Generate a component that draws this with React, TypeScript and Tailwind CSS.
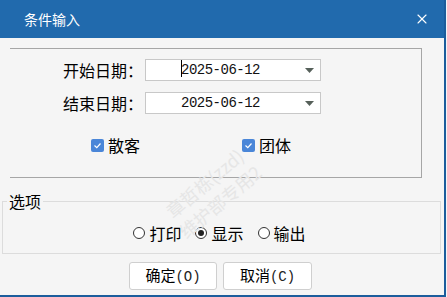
import { X } from 'lucide-react';

const cjk = { fontFamily: '"Noto Sans CJK SC", "Microsoft YaHei", sans-serif' };
const mono = { fontFamily: '"Liberation Mono", "DejaVu Sans Mono", monospace' };

const DateBox = ({ value, caret }: { value: string; caret?: boolean }) => (
  <div className="flex h-[22px] w-[176px] items-center border border-[#c8c8c8] bg-white">
    <div className="flex flex-1 justify-center pr-[10px]">
      <span className="relative text-[14px] leading-none tracking-[-0.5px] text-[#111]" style={mono}>
        {caret && <span className="absolute left-0 top-[-3px] h-[17px] w-px bg-black" />}
        {value}
      </span>
    </div>
    <svg width="9" height="5" viewBox="0 0 9 5" className="mr-[6px]">
      <path d="M0 0 H9 L4.5 5 Z" fill="#56605a" />
    </svg>
  </div>
);

const Check = ({ label }: { label: string }) => (
  <label className="flex items-center gap-[4px]">
    <span className="flex h-[13px] w-[13px] items-center justify-center rounded-[2px] bg-[#4a86d8]">
      <svg width="9" height="7" viewBox="0 0 9 7">
        <path d="M1.5 3.5 L3.8 5.6 L7.5 1.5" fill="none" stroke="white" strokeWidth="1.2" />
      </svg>
    </span>
    <span className="text-[16px] leading-[20px] text-black">{label}</span>
  </label>
);

const Radio = ({ label, checked }: { label: string; checked?: boolean }) => (
  <label className="flex items-center gap-[4px]">
    <span className="flex h-[12px] w-[12px] items-center justify-center rounded-full border border-[#333] bg-white">
      {checked && <span className="h-[6px] w-[6px] rounded-full bg-[#222]" />}
    </span>
    <span className="text-[16px] leading-[20px] text-black">{label}</span>
  </label>
);

export default function App() {
  return (
    <div className="relative h-[297px] w-[447px] overflow-hidden bg-[#f3f5f8]" style={cjk}>
      <div className="flex h-[297px] w-[446px] flex-col border-b-2 border-r-2 border-[#1c5d9c] bg-[#f5f5f5]">
        <div className="flex h-[38px] shrink-0 items-center justify-between bg-[#216aad] pl-[24px] pr-[14px]">
          <span className="text-[14px] text-white">条件输入</span>
          <X size={16} strokeWidth={1.6} className="text-white" />
        </div>

        <div className="ml-[10px] mt-[10px] h-[130px] w-[412px] border-b border-r border-t border-[#a6a6a6] pt-[10px]">
          <div className="flex flex-col gap-[11px] pl-[53px]">
            <div className="flex items-center gap-[2px]">
              <span className="w-[80px] text-[16px] leading-[20px] text-black">开始日期：</span>
              <DateBox value="2025-06-12" caret />
            </div>
            <div className="flex items-center gap-[2px]">
              <span className="w-[80px] text-[16px] leading-[20px] text-black">结束日期：</span>
              <DateBox value="2025-06-12" />
            </div>
          </div>
          <div className="mt-[21px] flex pl-[81px]">
            <div className="w-[151px]"><Check label="散客" /></div>
            <Check label="团体" />
          </div>
        </div>

        <fieldset className="ml-[2px] mt-[15px] w-[439px] border border-[#dcdcdc] pb-[10px] pt-[14px]">
          <legend className="ml-[4px] px-[2px] text-[16px] leading-[16px] text-black">选项</legend>
          <div className="flex justify-center gap-[14px] pr-[4px]">
            <Radio label="打印" />
            <Radio label="显示" checked />
            <Radio label="输出" />
          </div>
        </fieldset>

        <div className="mt-[8px] flex justify-center gap-[6px] pr-[3px]">
          <button className="h-[28px] w-[88px] rounded-[3px] border border-[#cfcfcf] bg-white text-[15px] text-black">
            确定<span style={mono} className="text-[14px] text-[#222]">(O)</span>
          </button>
          <button className="h-[28px] w-[89px] rounded-[3px] border border-[#cfcfcf] bg-white text-[15px] text-black">
            取消<span style={mono} className="text-[14px] text-[#222]">(C)</span>
          </button>
        </div>
      </div>

      <div className="pointer-events-none absolute left-[212px] top-[192px] flex -translate-x-1/2 -translate-y-1/2 -rotate-[40deg] flex-col items-center whitespace-nowrap text-[18px] leading-[24px] text-[#e6e6e6]">
        <span>章哲栋(zzd)</span>
        <span>维护部专用2</span>
      </div>
    </div>
  );
}
